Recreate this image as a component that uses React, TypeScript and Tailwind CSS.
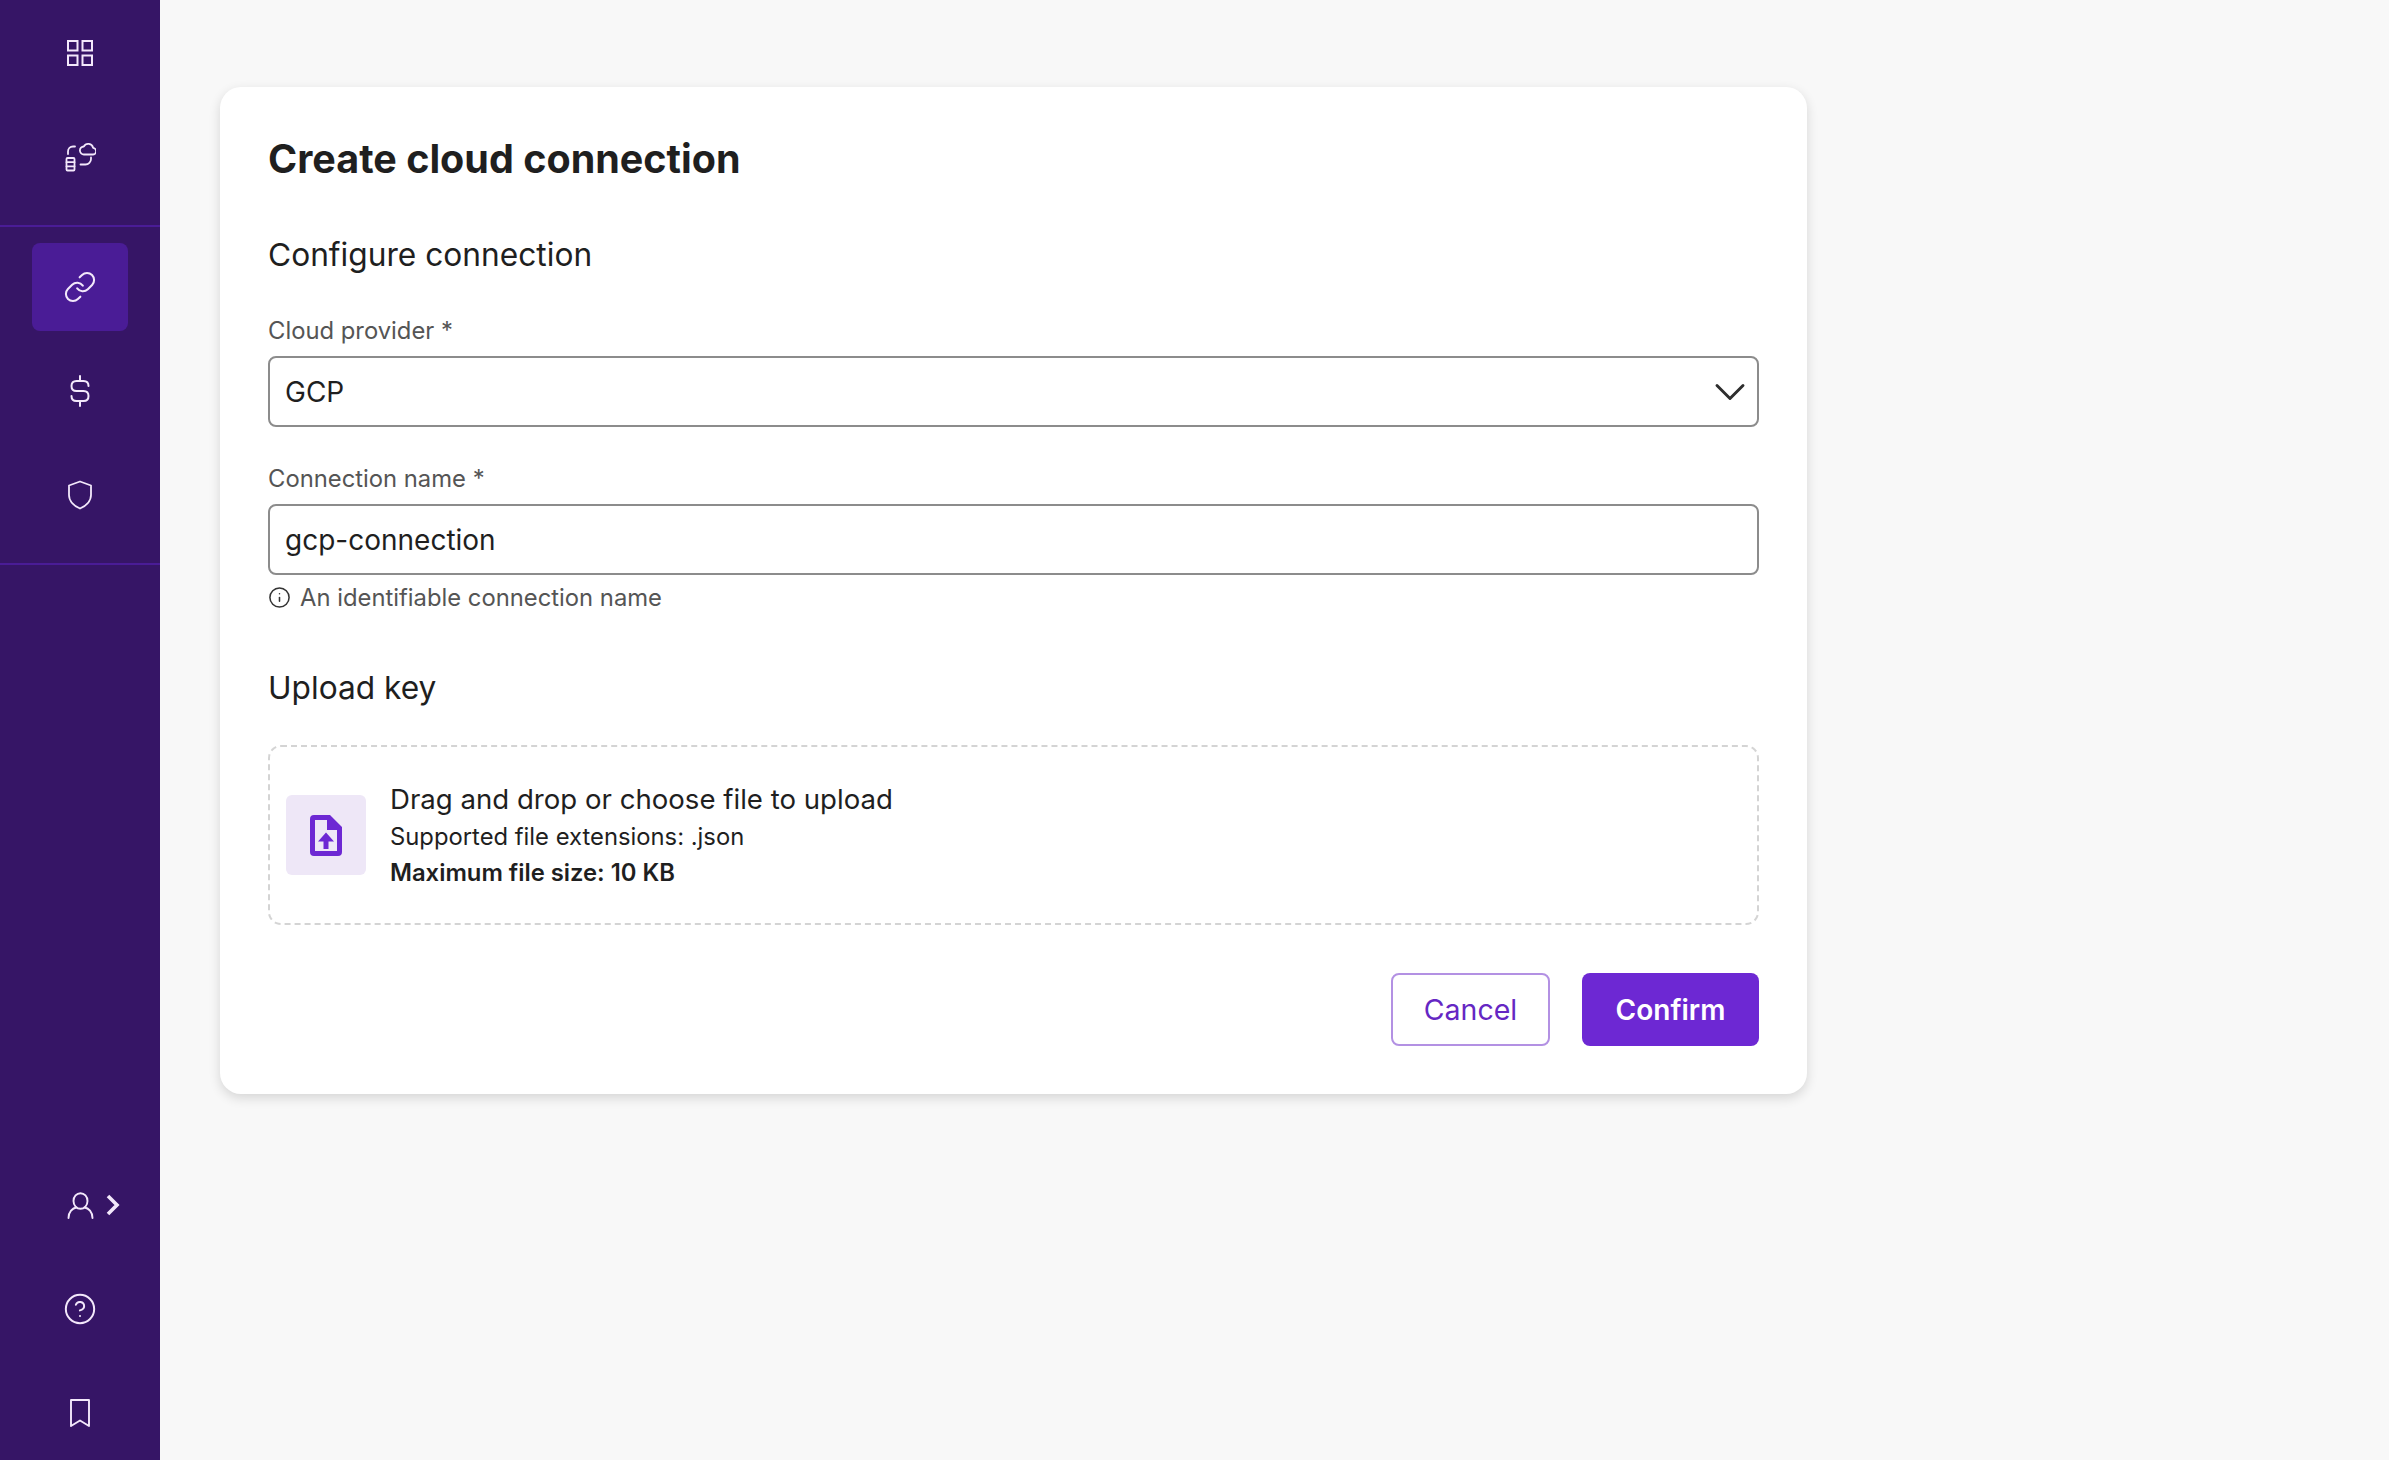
import { FC, ReactNode } from "react";
import { ChevronDown, CircleHelp, Info, Link } from "lucide-react";

const GridIcon = () => (
  <svg width="28" height="28" viewBox="0 0 28 28" fill="none" stroke="currentColor" strokeWidth="2">
    <rect x="2" y="2" width="9.5" height="9.5" />
    <rect x="16.5" y="2" width="9.5" height="9.5" />
    <rect x="2" y="16.5" width="9.5" height="9.5" />
    <rect x="16.5" y="16.5" width="9.5" height="9.5" />
  </svg>
);

const CloudDataIcon = () => (
  <svg width="31" height="30" viewBox="0 0 31 30" fill="none" stroke="currentColor" strokeWidth="1.8" strokeLinecap="round" strokeLinejoin="round">
    <path d="M19 12.500h8.500a3.300 3.300 0 0 0 .6-6.600 5 5 0 0 0-9.300-1.400 4 4 0 0 0 .2 8Z" />
    <path d="M3 12V9.500a5 5 0 0 1 5-5h2" />
    <path d="M15.500 22.500h5a5.500 5.500 0 0 0 5.500-5.500v-1.500" />
    <rect x="1.500" y="16" width="8" height="12.500" rx="1" />
    <path d="M1.500 20.200h8M1.500 24.300h8" />
  </svg>
);

const DollarIcon = () => (
  <svg width="20" height="32" viewBox="0 0 20 32" fill="none" stroke="currentColor" strokeWidth="2" strokeLinecap="round">
    <path d="M10 1v5M10 26v5" />
    <path d="M18.500 11c0-3-2-5-5-5h-7c-3 0-5 2-5 5s2 5 5 5h7c3 0 5 2 5 5s-2 5-5 5h-7c-3 0-5-2-5-5" />
  </svg>
);

const ShieldIcon = () => (
  <svg width="26" height="30" viewBox="0 0 26 30" fill="none" stroke="currentColor" strokeWidth="1.8" strokeLinejoin="round">
    <path d="M13 1.500 24 5.500V15c0 6-5 11-11 13.500C7 26 2 21 2 15V5.500Z" />
  </svg>
);

const UserIcon = () => (
  <svg width="27" height="27" viewBox="0 0 27 27" fill="none" stroke="currentColor" strokeWidth="1.9" strokeLinecap="round">
    <ellipse cx="13.500" cy="9" rx="7" ry="7.800" />
    <path d="M1.500 26c0-6 4-10 8-10.500M25.500 26c0-6-4-10-8-10.500" />
  </svg>
);

const BookmarkIcon = () => (
  <svg width="22" height="30" viewBox="0 0 22 30" fill="none" stroke="currentColor" strokeWidth="1.9" strokeLinejoin="round">
    <path d="M2 2h18v26l-9-5.500L2 28Z" />
  </svg>
);

const FileUploadIcon = () => (
  <svg width="32" height="41" viewBox="0 0 32 41" fill="#6d28d3">
    <path fillRule="evenodd" d="M4 0h16l12 12v25a4 4 0 0 1-4 4H4a4 4 0 0 1-4-4V4a4 4 0 0 1 4-4Zm1 5v31h22V15H17V5H5Z" />
    <path d="M16 17.500 24 26.500h-5.500V34h-5v-7.500H8Z" />
  </svg>
);

const NavItem: FC<{ children: ReactNode; active?: boolean }> = ({ children, active }) => (
  <div className={`flex h-[88px] w-24 items-center justify-center rounded-lg text-[#f3e8fb] ${active ? "bg-[#4a1c96]" : ""}`}>{children}</div>
);

const Label: FC<{ children: ReactNode }> = ({ children }) => <div className="mb-[11px] text-[23.8px] leading-[29px] text-[#555555]">{children}</div>;

export default function App() {
  return (
    <div className="flex h-screen overflow-hidden bg-[#f8f8f8] font-['Inter',sans-serif] text-[#1f1f1f]">
      <aside className="flex h-full w-40 shrink-0 flex-col bg-[#361566]">
        <div className="flex flex-col items-center gap-4 pb-6 pt-[9px]">
          <NavItem>
            <GridIcon />
          </NavItem>
          <NavItem>
            <CloudDataIcon />
          </NavItem>
        </div>
        <div className="flex flex-col items-center gap-4 border-y-2 border-[#4a1c96] pb-6 pt-4">
          <NavItem active>
            <Link size={34} strokeWidth={1.45} />
          </NavItem>
          <NavItem>
            <DollarIcon />
          </NavItem>
          <NavItem>
            <ShieldIcon />
          </NavItem>
        </div>
        <div className="mt-auto flex flex-col items-center gap-4 pb-[3px]">
          <div className="relative">
            <NavItem>
              <UserIcon />
            </NavItem>
            <svg width="14" height="22" viewBox="0 0 14 22" fill="none" stroke="currentColor" strokeWidth="3.6" className="absolute left-[74px] top-[33px] text-[#f3e8fb]">
              <path d="M2 2l9 9-9 9" />
            </svg>
          </div>
          <NavItem>
            <CircleHelp size={34} strokeWidth={1.4} />
          </NavItem>
          <NavItem>
            <BookmarkIcon />
          </NavItem>
        </div>
      </aside>
      <main className="pl-[60px] pt-[87px]">
        <div className="w-[1587px] rounded-[21px] bg-white pb-[48px] pl-[48px] pr-[48px] pt-[49px] shadow-[0_4px_12px_rgba(0,0,0,0.14)]">
          <h1 className="text-[39.5px] font-bold leading-[47px] text-[#1f1f1f]">Create cloud connection</h1>
          <h2 className="mt-[52px] text-[31.7px] leading-[40px]">Configure connection</h2>

          <div className="mt-[41px]">
            <Label>Cloud provider *</Label>
            <div className="flex h-[71px] items-center justify-between rounded-lg border-2 border-[#8c8c8c] pl-[15px] pr-px text-[28px]">
              <span>GCP</span>
              <ChevronDown size={52} strokeWidth={1.35} className="text-[#2e2e2e]" />
            </div>
          </div>

          <div className="mt-[37px]">
            <Label>Connection name *</Label>
            <div className="flex h-[71px] items-center rounded-lg border-2 border-[#8c8c8c] pl-[15px] text-[28px]">gcp-connection</div>
            <div className="mt-2 flex items-center gap-[9px] text-[23.8px] leading-[29px] text-[#555555]">
              <Info size={23} strokeWidth={1.6} className="text-[#333333]" />
              <span>An identifiable connection name</span>
            </div>
          </div>

          <h2 className="mt-[56px] text-[31.7px] leading-[40px]">Upload key</h2>

          <div className="mt-[37px] flex h-[180px] items-center gap-6 rounded-[13px] border-2 border-dashed border-[#d4d4d4] pl-[16px]">
            <div className="flex h-[80px] w-[80px] items-center justify-center rounded-md bg-[#eee7f7]">
              <FileUploadIcon />
            </div>
            <div>
              <div className="text-[27.6px] leading-[37px]">Drag and drop or choose file to upload</div>
              <div className="text-[23.8px] leading-[37px]">Supported file extensions: .json</div>
              <div className="text-[23.8px] font-semibold leading-[35px]">Maximum file size: 10 KB</div>
            </div>
          </div>

          <div className="mt-[48px] flex justify-end gap-8">
            <button className="h-[73px] w-[159px] rounded-lg border-2 border-[#b391e3] pt-px text-[28.5px] text-[#6527c3]">Cancel</button>
            <button className="h-[73px] w-[177px] rounded-lg bg-[#6d28d3] text-[28px] font-semibold text-white">Confirm</button>
          </div>
        </div>
      </main>
    </div>
  );
}
